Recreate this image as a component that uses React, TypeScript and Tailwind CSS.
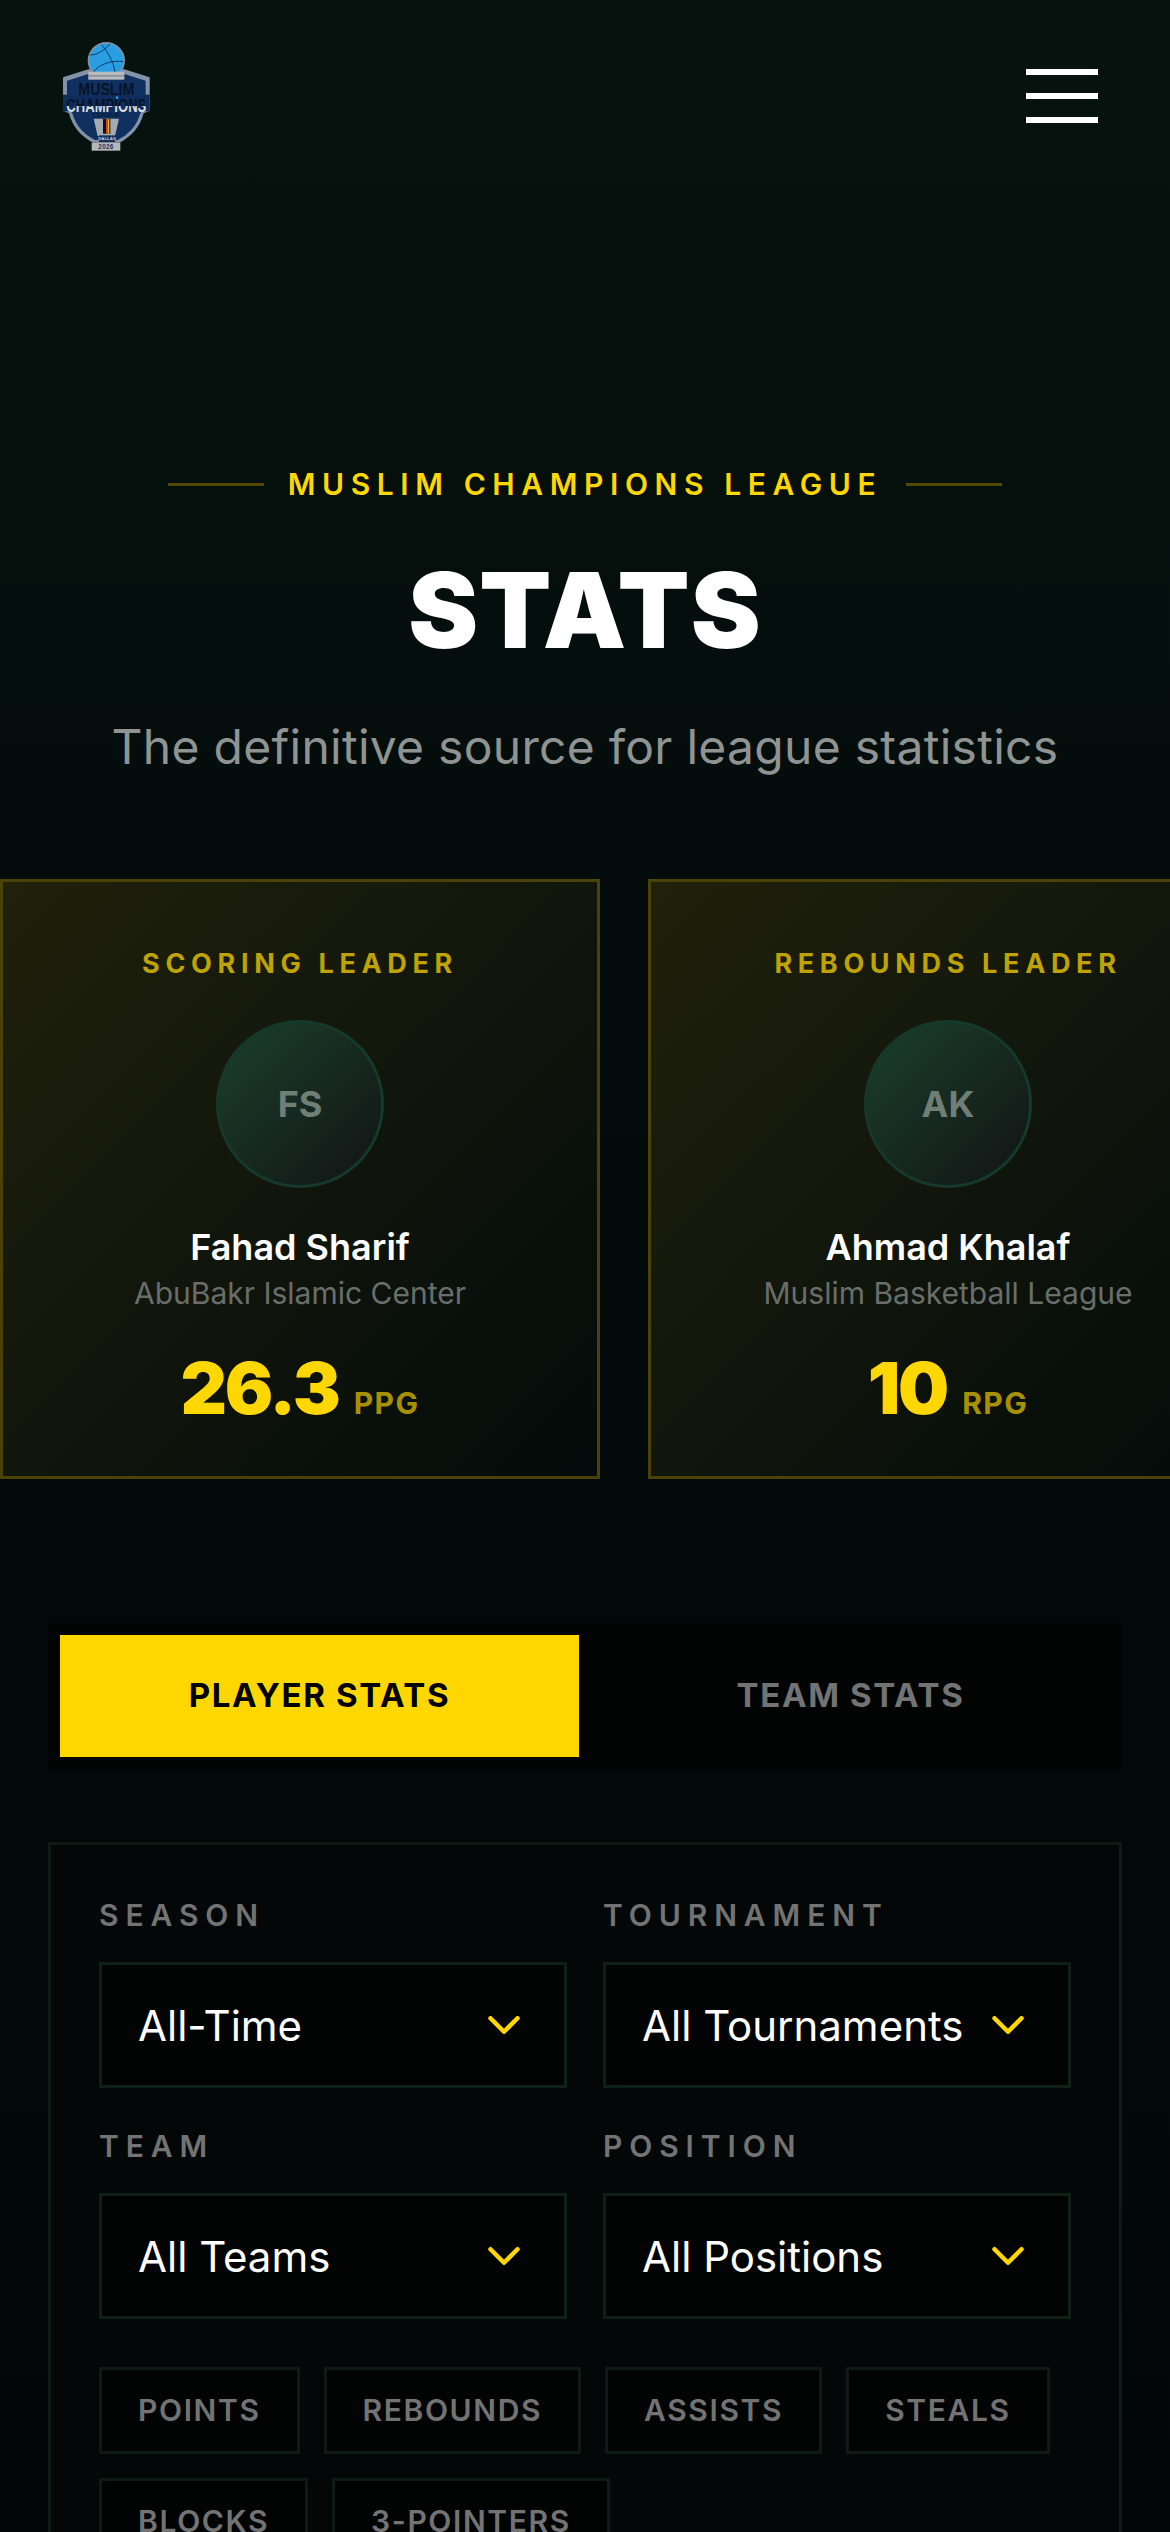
const Logo = () => (
  <svg viewBox="70 60 324 336" className="w-[108px] h-[112px] shrink-0">
    <defs>
      <linearGradient id="champFill" gradientUnits="userSpaceOnUse" x1="0" y1="232" x2="0" y2="276">
        <stop offset="0.6" stopColor="#06142a" />
        <stop offset="0.6" stopColor="#d8dde4" />
      </linearGradient>
    </defs>
    <path d="M176 148 L100 172 L100 272 L118 280 C128 320 155 350 190 368 L270 368 C305 350 332 320 342 280 L360 272 L360 172 L284 148 Z" fill="#8492a8" />
    <path d="M176 162 L112 182 L112 262 L128 280 C138 318 165 345 196 360 L264 360 C295 345 322 318 332 280 L348 262 L348 182 L284 162 Z" fill="#10305f" />
    <rect x="100" y="224" width="260" height="50" fill="#0f2d5c" />
    <circle cx="230" cy="122" r="56" fill="#8492a8" />
    <circle cx="230" cy="122" r="51" fill="#2a9ee2" />
    <path d="M180 105 C205 105 225 90 240 72 M190 158 C210 130 250 120 281 125 M215 74 C240 100 255 135 258 170" fill="none" stroke="#123a66" strokeWidth="3" />
    <rect x="176" y="155" width="108" height="24" fill="#b9bcbf" />
    <rect x="176" y="165" width="108" height="5" fill="#8e9194" />
    <text x="230" y="226" textAnchor="middle" fontFamily="Liberation Sans, sans-serif" fontWeight="700" fontSize="50" fill="#06142a" textLength="168" lengthAdjust="spacingAndGlyphs">MUSLIM</text>
    <text x="230" y="275" textAnchor="middle" fontFamily="Liberation Sans, sans-serif" fontWeight="700" fontSize="56" fill="url(#champFill)" textLength="240" lengthAdjust="spacingAndGlyphs">CHAMPIONS</text>
    <circle cx="262" cy="233" r="4" fill="#2a9ee2" />
    <text x="230" y="291" textAnchor="middle" fontFamily="Liberation Sans, sans-serif" fontWeight="700" fontSize="17" fill="#071a38" textLength="82" lengthAdjust="spacingAndGlyphs">LEAGUE</text>
    <path d="M192 296 L268 296 L256 348 L204 348 Z" fill="#a6abb0" />
    <rect x="220" y="297" width="22" height="44" fill="#111" />
    <rect x="229" y="297" width="5" height="44" fill="#c8452a" />
    <rect x="234" y="297" width="5" height="44" fill="#e4ae2b" />
    <rect x="208" y="346" width="48" height="20" fill="#17315c" />
    <text x="232" y="361" textAnchor="middle" fontFamily="Liberation Sans, sans-serif" fontWeight="700" fontSize="13" fill="#c9ced6">DALLAS</text>
    <rect x="186" y="368" width="86" height="24" fill="#b5b8bb" />
    <text x="229" y="387" textAnchor="middle" fontFamily="Liberation Sans, sans-serif" fontWeight="700" fontSize="19" letterSpacing="1" fill="#17315c">2026</text>
  </svg>
);

const Chevron = () => (
  <svg viewBox="0 0 24 24" fill="none" stroke="#FFD700" strokeWidth="2" strokeLinecap="round" strokeLinejoin="round" className="w-[54px] h-[54px] shrink-0">
    <path d="M6 9l6 6 6-6" />
  </svg>
);

const LeaderCard = ({ label, initials, name, team, value, unit }: { label: string; initials: string; name: string; team: string; value: string; unit: string }) => (
  <div className="w-[600px] h-[600px] shrink-0 border-[3px] border-[#4a4208] bg-gradient-to-br from-[#20210b] to-[#040b0a] flex flex-col items-center pt-[66px]">
    <div className="text-[27px] leading-[32px] font-bold tracking-[0.21em] text-[#bfa204] whitespace-nowrap">{label}</div>
    <div className="mt-[40px] w-[168px] h-[168px] rounded-full border-[3px] border-[#15392a] bg-gradient-to-br from-[#1a4029] to-[#111416] flex items-center justify-center text-[36px] font-bold text-[#6f7f78]">{initials}</div>
    <div className="mt-[37px] text-[36px] leading-[44px] font-semibold text-white whitespace-nowrap">{name}</div>
    <div className="mt-[6px] text-[30px] leading-[36px] text-[#6a6e6b] whitespace-nowrap">{team}</div>
    <div className="mt-[37px] flex items-baseline gap-[15px]">
      <span className="text-[72px] leading-[80px] font-black tracking-[-0.03em] text-[#FFD700]">{value}</span>
      <span className="text-[30px] leading-[36px] font-bold tracking-[0.05em] text-[#a89000]">{unit}</span>
    </div>
  </div>
);

const Field = ({ label, value }: { label: string; value: string }) => (
  <div className="flex flex-col">
    <div className="text-[30px] leading-[36px] font-semibold tracking-[0.23em] text-[#737373]">{label}</div>
    <div className="mt-[29px] h-[126px] border-[3px] border-[#0f2018] bg-[#020303] flex items-center justify-between pl-[36px] pr-[33px]">
      <span className="text-[42px] text-white whitespace-nowrap">{value}</span>
      <Chevron />
    </div>
  </div>
);

const Pill = ({ children }: { children: string }) => (
  <div className="h-[87px] shrink-0 border-[3px] border-[#0e1a14] bg-[#020303] px-[36px] flex items-center text-[30px] font-semibold tracking-[0.054em] text-[#737373]">{children}</div>
);

export default function App() {
  return (
    <div className="w-[1170px] h-[2532px] overflow-hidden bg-gradient-to-b from-[#06130e] via-[#030a0a] to-[#020606] font-['Inter',sans-serif]">
      <header className="flex items-start justify-between pt-[40px] pl-[53px] pr-[72px]">
        <Logo />
        <button className="mt-[29px] w-[72px] flex flex-col gap-[18px]">
          <span className="block h-[6px] bg-white" />
          <span className="block h-[6px] bg-white" />
          <span className="block h-[6px] bg-white" />
        </button>
      </header>

      <section className="mt-[314px] flex flex-col items-center">
        <div className="flex items-center gap-[24px]">
          <span className="block w-[96px] h-[3px] bg-[#544a06]" />
          <span className="text-[30px] leading-[36px] font-semibold tracking-[0.22em] text-[#FFD700] whitespace-nowrap">MUSLIM CHAMPIONS LEAGUE</span>
          <span className="block w-[96px] h-[3px] bg-[#544a06]" />
        </div>
        <h1 className="mt-[48px] text-[105px] leading-[120px] font-black tracking-[0.01em] text-white">STATS</h1>
        <p className="mt-[47px] text-[48px] leading-[60px] tracking-[0.27px] text-[#8f9392] whitespace-nowrap">The definitive source for league statistics</p>
      </section>

      <section className="mt-[102px] flex gap-[48px]">
        <LeaderCard label="SCORING LEADER" initials="FS" name="Fahad Sharif" team="AbuBakr Islamic Center" value="26.3" unit="PPG" />
        <LeaderCard label="REBOUNDS LEADER" initials="AK" name="Ahmad Khalaf" team="Muslim Basketball League" value="10" unit="RPG" />
      </section>

      <section className="mx-[48px] mt-[144px] h-[146px] bg-[#020403] flex gap-[12px] p-[12px]">
        <div className="flex-1 bg-[#FFD700] flex items-center justify-center text-[33px] font-bold tracking-[0.05em] text-black">PLAYER STATS</div>
        <div className="flex-1 flex items-center justify-center text-[33px] font-bold tracking-[0.05em] text-[#737373]">TEAM STATS</div>
      </section>

      <section className="mx-[48px] mt-[73px] border-[3px] border-[#0e1a14] bg-[#040707] pt-[52px] px-[48px] pb-[48px]">
        <div className="grid grid-cols-2 gap-x-[36px] gap-y-[40px]">
          <Field label="SEASON" value="All-Time" />
          <Field label="TOURNAMENT" value="All Tournaments" />
          <Field label="TEAM" value="All Teams" />
          <Field label="POSITION" value="All Positions" />
        </div>
        <div className="mt-[48px] flex flex-wrap gap-[24px]">
          <Pill>POINTS</Pill>
          <Pill>REBOUNDS</Pill>
          <Pill>ASSISTS</Pill>
          <Pill>STEALS</Pill>
          <Pill>BLOCKS</Pill>
          <Pill>3-POINTERS</Pill>
        </div>
      </section>
    </div>
  );
}
